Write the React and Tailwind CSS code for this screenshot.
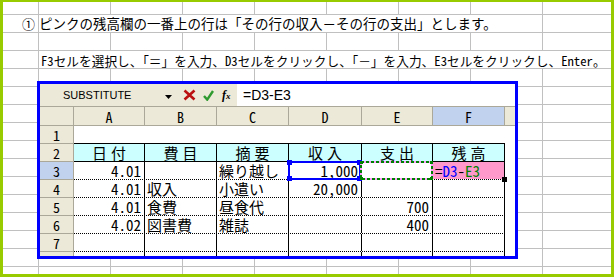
import React from 'react';

const colW = ['w-[71px]', 'w-[72px]', 'w-[72px]', 'w-[73px]', 'w-[71px]', 'w-[72px]'];
const colAlign = [
  'justify-end pr-[3px]',
  'pl-[2px]',
  'pl-[2px]',
  'justify-end pr-[3px]',
  'justify-end pr-[3px]',
  'pl-[2px]',
];
const headers = ['日付', '費目', '摘要', '収入', '支出', '残高'];

const dataRows = [
  { n: 3, cells: ['4.01', '', '繰り越し', '1,000', '', ''] },
  { n: 4, cells: ['4.01', '収入', '小遣い', '20,000', '', ''] },
  { n: 5, cells: ['4.01', '食費', '昼食代', '', '700', ''] },
  { n: 6, cells: ['4.02', '図書費', '雑誌', '', '400', ''] },
  { n: 7, cells: ['', '', '', '', '', ''] },
];

const mono = "font-['Noto_Sans_Mono_CJK_JP','Noto_Sans_CJK_JP',monospace]";

const RowNum = ({ n, active, last }) => (
  <div
    className={`w-[34px] shrink-0 flex items-center justify-center border-r border-[#aca899] text-[14px] leading-[16px] ${
      last ? '' : 'border-b'
    } ${active ? 'bg-[#c1d2ee]' : 'bg-[#ece9d8]'}`}
  >
    {n}
  </div>
);

// the reference boxes Excel draws while you type a formula
const BlueRef = () => (
  <div className="absolute -left-px -top-px -bottom-px right-0 z-10 border-2 border-[#0000ff]">
    <div className="absolute -left-[3px] -top-[3px] w-[5px] h-[5px] bg-[#0000ff]" />
    <div className="absolute -right-[3px] -top-[3px] w-[5px] h-[5px] bg-[#0000ff]" />
    <div className="absolute -left-[3px] -bottom-[3px] w-[5px] h-[5px] bg-[#0000ff]" />
    <div className="absolute -right-[3px] -bottom-[3px] w-[5px] h-[5px] bg-[#0000ff]" />
  </div>
);

const GreenRef = () => (
  <svg className="absolute -left-[2px] -top-px z-10" width="73" height="19">
    <rect x="1" y="1" width="71" height="17" fill="none" stroke="#ff99ff" strokeWidth="2" />
    <rect x="1" y="1" width="71" height="17" fill="none" stroke="#008000" strokeWidth="2" strokeDasharray="3 2" />
    <rect x="0" y="0" width="3" height="3" fill="#008000" />
    <rect x="70" y="0" width="3" height="3" fill="#008000" />
    <rect x="0" y="16" width="3" height="3" fill="#008000" />
    <rect x="70" y="16" width="3" height="3" fill="#008000" />
  </svg>
);

const App = () => {
  return (
    <div className="w-[614px] h-[280px] bg-white overflow-hidden">
      <div className="h-[277px] border-[#99cc00] border-l-[3px] border-t-2 border-r-[3px] border-b-[3px] bg-[linear-gradient(to_right,#c0c0c0_1px,transparent_1px),linear-gradient(to_bottom,#c0c0c0_1px,transparent_1px)] bg-[length:72px_18px] bg-[position:35px_12px] font-['Noto_Sans_CJK_JP',sans-serif] text-black">
        <div className="h-[12px]" />

        {/* instruction lines */}
        <div className="flex h-[18px]">
          <div className="w-[36px] shrink-0 mt-px h-[17px] flex items-center justify-end pr-[4px] text-[13px] leading-none">
            ①
          </div>
          <div className="w-[502px] mt-px h-[17px] bg-white flex items-center text-[13.5px] leading-none whitespace-nowrap">
            ピンクの残高欄の一番上の行は「その行の収入－その行の支出」とします。
          </div>
        </div>
        <div className="h-[18px]" />
        <div className="flex h-[18px]">
          <div className="w-[36px] shrink-0" />
          <div className={`flex-1 mt-px h-[17px] bg-white flex items-end pl-[2px] ${mono} text-[12.7px] leading-[15px] whitespace-nowrap`}>
            F3セルを選択し、「＝」を入力、D3セルをクリックし、「－」を入力、E3セルをクリックし、Enter。
          </div>
        </div>

        {/* spreadsheet window */}
        <div className="ml-[34px] mt-[13px] w-[481px] h-[178px] border-[3px] border-[#0000ff] bg-white flex flex-col overflow-hidden">
          {/* formula bar */}
          <div className="h-[23px] shrink-0 flex items-center bg-[#ece9d8] border-b border-[#aca899]">
            <div className="w-[125px] shrink-0 pl-[23px] font-['Liberation_Sans',sans-serif] text-[11px] leading-none">
              SUBSTITUTE
            </div>
            <svg className="mt-[3px] shrink-0" width="7" height="4" viewBox="0 0 7 4">
              <path d="M0 0h7L3.5 4z" fill="#000" />
            </svg>
            <svg className="ml-[11px] shrink-0" width="13" height="12" viewBox="0 0 13 12">
              <path d="M1.5 1.5l10 9M11.5 1.5l-10 9" stroke="#bb1010" strokeWidth="2.6" />
            </svg>
            <svg className="ml-[7px] shrink-0" width="11" height="11" viewBox="0 0 11 11">
              <path d="M1 6l3.2 3.6L10 1" fill="none" stroke="#2f9a2f" strokeWidth="2.4" />
            </svg>
            <div className="ml-[8px] w-[10px] shrink-0 italic font-bold font-['Liberation_Serif',serif] text-[12px] leading-none">
              f<span className="text-[9px]">x</span>
            </div>
            <div className="ml-[5px] flex-1 h-full bg-white flex items-center pl-[6px] font-['Liberation_Sans',sans-serif] text-[14px] leading-none">
              =D3-E3
            </div>
          </div>

          {/* column headers */}
          <div className={`h-[19px] shrink-0 flex bg-[#ece9d8] border-b border-[#aca899] ${mono} text-[14px]`}>
            <div className="w-[34px] shrink-0 border-r border-[#aca899]" />
            {['A', 'B', 'C', 'D', 'E', 'F'].map((c, i) => (
              <div
                key={c}
                className={`${colW[i]} shrink-0 flex items-center justify-center pt-[2px] border-r border-[#aca899] ${
                  c === 'F' ? 'bg-[#c1d2ee]' : ''
                }`}
              >
                {c}
              </div>
            ))}
            <div className="flex-1" />
          </div>

          <div className={`flex-1 flex flex-col ${mono} text-[15px] leading-[17px]`}>
            {/* row 1 */}
            <div className="flex h-[18px] shrink-0">
              <RowNum n={1} />
              <div className="flex w-[431px] border-b border-black" />
            </div>

            {/* row 2 : table headings */}
            <div className="flex h-[18px] shrink-0">
              <RowNum n={2} />
              <div className="flex w-[431px] bg-[#ccffff] border-b border-black">
                {headers.map((h, i) => (
                  <div
                    key={h}
                    className={`${colW[i]} shrink-0 flex items-center justify-center pl-[4px] tracking-[4px] border-r border-black`}
                  >
                    {h}
                  </div>
                ))}
              </div>
            </div>

            {dataRows.map((row) => (
              <div key={row.n} className="flex h-[18px] shrink-0">
                <RowNum n={row.n} active={row.n === 3} />
                <div className="flex w-[431px] border-b border-dotted border-black">
                  {row.cells.map((v, i) => {
                    const isF3 = row.n === 3 && i === 5;
                    return (
                      <div
                        key={i}
                        className={`${colW[i]} ${colAlign[i]} relative shrink-0 flex items-center border-r border-black whitespace-nowrap ${
                          isF3 ? 'bg-[#ff99cc]' : ''
                        }`}
                      >
                        {isF3 ? (
                          <>
                            <span>=</span>
                            <span className="text-[#0000ff]">D3</span>
                            <span>-</span>
                            <span className="text-[#008000]">E3</span>
                            <div className="absolute -right-[3px] -bottom-[3px] z-20 w-[5px] h-[5px] bg-black" />
                          </>
                        ) : (
                          v
                        )}
                        {row.n === 3 && i === 3 && <BlueRef />}
                        {row.n === 3 && i === 4 && <GreenRef />}
                      </div>
                    );
                  })}
                </div>
              </div>
            ))}

            {/* row 8, cut off by the window edge */}
            <div className="flex flex-1">
              <RowNum n="" last />
              <div className="flex w-[431px]">
                {colW.map((w, i) => (
                  <div key={i} className={`${w} shrink-0 border-r border-black`} />
                ))}
              </div>
            </div>
          </div>
        </div>
      </div>
    </div>
  );
};

export default App;
